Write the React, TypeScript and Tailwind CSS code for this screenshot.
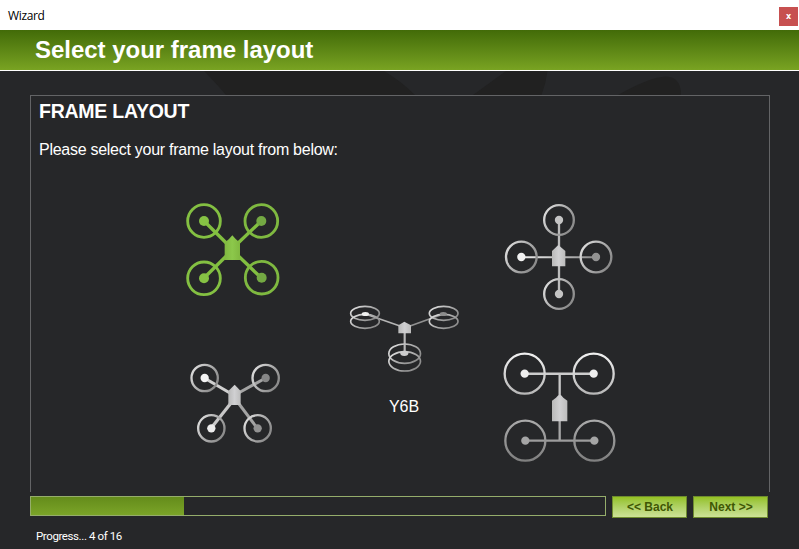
import type { ReactNode } from 'react';

function Shades() {
  return (
    <svg className="block h-6 w-full" viewBox="0 71 799 24" preserveAspectRatio="none" fill="#212121">
      <path d="M204 71H384Q401 81 415 95H226Q214 81 204 71Z" />
      <path d="M506 71H547.5Q546 83 541.5 95H473Z" />
      <path d="M618 95Q650 77 666 76.5Q681 77 681 95Z" />
    </svg>
  );
}

type RotorProps = { x: number; y: number; r: number; stroke: string; hub: string; hr?: number; w?: number };

function Rotor({ x, y, r, stroke, hub, hr = 12.5, w = 7 }: RotorProps) {
  return (
    <g>
      <circle cx={x} cy={y} r={r} fill="none" stroke={stroke} strokeWidth={w} />
      <circle cx={x} cy={y} r={hr} fill={hub} />
    </g>
  );
}

function Metals() {
  return (
    <svg className="absolute h-0 w-0">
      <defs>
        <linearGradient id="ring" x1="0" y1="0" x2="1" y2="0.6">
          <stop offset="0" stopColor="#e6e6e6" />
          <stop offset="0.5" stopColor="#b4b4b4" />
          <stop offset="1" stopColor="#8c8c8c" />
        </linearGradient>
        <linearGradient id="ringTop" x1="0" y1="0" x2="0" y2="1">
          <stop offset="0" stopColor="#f0f0f0" />
          <stop offset="1" stopColor="#b8b8b8" />
        </linearGradient>
        <linearGradient id="ringLow" x1="0" y1="0" x2="0" y2="1">
          <stop offset="0" stopColor="#aaaaaa" />
          <stop offset="1" stopColor="#808080" />
        </linearGradient>
        <linearGradient id="body" x1="0" y1="0" x2="1" y2="0">
          <stop offset="0" stopColor="#b9b9b9" />
          <stop offset="0.5" stopColor="#d0d0d2" />
          <stop offset="1" stopColor="#bcbcbc" />
        </linearGradient>
        <linearGradient id="arm" gradientUnits="userSpaceOnUse" x1="75" y1="0" x2="305" y2="0">
          <stop offset="0" stopColor="#eeeeee" />
          <stop offset="0.5" stopColor="#c2c2c2" />
          <stop offset="1" stopColor="#858585" />
        </linearGradient>
        <linearGradient id="leaf" x1="0" y1="0" x2="1" y2="0">
          <stop offset="0" stopColor="#80b840" />
          <stop offset="0.5" stopColor="#8cc84b" />
          <stop offset="1" stopColor="#80b840" />
        </linearGradient>
      </defs>
    </svg>
  );
}

function XFrame() {
  return (
    <svg className="block h-[110px] w-[110px]" viewBox="0 0 330 330">
      <path d="M72 78L148 153M72 249L148 174M244 78L165 153M244 249L166 174" stroke="#82bf40" strokeWidth="10" />
      <Rotor x={72} y={78} r={49} stroke="#84c042" hub="#86c244" hr={15} w={8.5} />
      <Rotor x={244} y={78} r={49} stroke="#7fb940" hub="#74a943" hr={15} w={8.5} />
      <Rotor x={72} y={250} r={49} stroke="#84c042" hub="#86c244" hr={15} w={8.5} />
      <Rotor x={245} y={248} r={49} stroke="#7fb940" hub="#74a943" hr={15} w={8.5} />
      <path d="M134 143L147 132L157 121L167 132L180 143V195H134Z" fill="url(#leaf)" />
    </svg>
  );
}

function PlusFrame() {
  return (
    <svg className="block h-[120px] w-[130px]" viewBox="0 0 390 360">
      <path d="M80 183.5H302V189.5H80Z" fill="url(#arm)" />
      <path d="M192 75V297" stroke="#bcbcbc" strokeWidth="7" />
      <Rotor x={192} y={75} r={44.5} stroke="url(#ring)" hub="#c4c4c4" />
      <Rotor x={79} y={186} r={46} stroke="url(#ring)" hub="#f2f2f2" />
      <Rotor x={303} y={186} r={46} stroke="url(#ring)" hub="#929292" />
      <Rotor x={192} y={297} r={44.5} stroke="url(#ring)" hub="#c4c4c4" />
      <path d="M171 168L190 150L211 168V214H171Z" fill="url(#body)" />
    </svg>
  );
}

function HFrame() {
  return (
    <svg className="block h-[125px] w-[130px]" viewBox="0 0 390 375">
      <path d="M89 86H296" stroke="#cccccc" strokeWidth="7.5" />
      <path d="M90 287H296" stroke="#9c9c9c" strokeWidth="6.5" />
      <path d="M194 88V160" stroke="#c8c8c8" strokeWidth="7" />
      <path d="M194 225V285" stroke="#a6a6a6" strokeWidth="7" />
      <Rotor x={89} y={86} r={60} stroke="url(#ringTop)" hub="#eeeeee" />
      <Rotor x={296} y={86} r={60} stroke="url(#ringTop)" hub="#eeeeee" />
      <Rotor x={91} y={287} r={60} stroke="url(#ringLow)" hub="#a5a5a5" />
      <Rotor x={298} y={287} r={60} stroke="url(#ringLow)" hub="#a5a5a5" />
      <path d="M171 167L183 158Q190 149 194 149Q199 149 205 158L217 167V229H171Z" fill="url(#body)" />
    </svg>
  );
}

function VFrame() {
  return (
    <svg className="block h-[100px] w-[110px]" viewBox="0 0 330 300">
      <path d="M73 69L155 117" stroke="#d0d0d0" strokeWidth="9.5" />
      <path d="M93 220L153 144" stroke="#c8c8c8" strokeWidth="9.5" />
      <path d="M257 69L170 117" stroke="#a4a4a4" strokeWidth="9" />
      <path d="M232 220L175 144" stroke="#a4a4a4" strokeWidth="9" />
      <Rotor x={74} y={69} r={39.5} stroke="url(#ring)" hub="#f4f4f4" />
      <Rotor x={257} y={69} r={39.5} stroke="url(#ring)" hub="#868686" />
      <Rotor x={94} y={220} r={39.5} stroke="url(#ring)" hub="#ececec" />
      <Rotor x={233} y={220} r={39.5} stroke="url(#ring)" hub="#929292" />
      <path d="M145 108L164 89L182 108V150H145Z" fill="url(#body)" />
    </svg>
  );
}

function YFrame() {
  return (
    <svg className="block h-[90px] w-[130px]" viewBox="0 0 390 270">
      <path d="M76 57L180 93" stroke="#b4b4b4" strokeWidth="5" />
      <path d="M310 57L208 94" stroke="#909090" strokeWidth="5" />
      <path d="M194 112V178" stroke="#b8b8b8" strokeWidth="6.5" />
      <g fill="none" stroke="url(#ring)" strokeWidth="5">
        <ellipse cx="75" cy="55" rx="43" ry="21" />
        <ellipse cx="75" cy="79" rx="43" ry="21" />
        <ellipse cx="311" cy="55" rx="43" ry="21" />
        <ellipse cx="311" cy="79" rx="43" ry="21" />
        <ellipse cx="194" cy="176" rx="47.5" ry="29" />
        <ellipse cx="194" cy="199" rx="47.5" ry="29" />
      </g>
      <ellipse cx="76" cy="57" rx="11" ry="6" fill="#f0f0f0" />
      <ellipse cx="310" cy="57" rx="11" ry="6" fill="#8c8c8c" />
      <ellipse cx="193" cy="175" rx="12" ry="8" fill="#cccccc" />
      <path d="M175 91L193 80L213 91V115H175Z" fill="url(#body)" />
    </svg>
  );
}

function NavButton({ children }: { children: ReactNode }) {
  return (
    <button className="flex h-[22px] w-[75px] items-center justify-center border border-[#6f8c2f] bg-linear-to-b from-[#94c11f] to-[#cde296] pl-px text-[12px] font-bold leading-none text-[#405704]">
      {children}
    </button>
  );
}

export default function App() {
  return (
    <div className="flex h-[549px] w-[799px] flex-col overflow-hidden bg-[#262729] font-['Liberation_Sans',Arial,sans-serif] text-white">
      <Metals />
      <header className="flex h-[30px] shrink-0 items-start justify-between bg-white pr-px pl-2">
        <span className="pt-2 font-['Open_Sans',sans-serif] text-[12px] leading-[15px] tracking-[-0.35px] text-black">Wizard</span>
        <button className="mt-[7px] flex h-[19px] w-[19px] items-center justify-center bg-[#c75050] font-['DejaVu_Sans',sans-serif] text-[8px] font-bold leading-none">x</button>
      </header>
      <div className="flex h-[41px] shrink-0 items-center border-b border-white bg-linear-to-b from-[#426b08] to-[#79a322] pl-[35px]">
        <h1 className="text-[24px] font-bold leading-none tracking-[-0.02px]">Select your frame layout</h1>
      </div>
      <Shades />
      <main className="mr-[29px] ml-[30px] h-[397px] shrink-0 border border-b-0 border-[#636466] bg-[#262729]">
        <div className="h-[99px] pt-1 pl-2">
          <h2 className="text-[19.5px] font-bold leading-[22px] tracking-[-0.25px]">FRAME LAYOUT</h2>
          <p className="mt-[19px] text-[16px] leading-[18px] tracking-[-0.27px]">Please select your frame layout from below:</p>
        </div>
        <div className="flex pl-[149px]">
          <div className="flex flex-col gap-[50px]">
            <XFrame />
            <VFrame />
          </div>
          <div className="ml-[50px] flex flex-col pt-[100px]">
            <YFrame />
            <span className="mt-[13px] pr-[2px] text-center text-[16px] leading-[18px]">Y6B</span>
          </div>
          <div className="ml-[25px] flex flex-col gap-[30px]">
            <PlusFrame />
            <HFrame />
          </div>
        </div>
      </main>
      <footer className="pt-1 pl-[30px]">
        <div className="flex items-start">
          <div className="h-5 w-[576px] border border-[#95ad6b]">
            <div className="h-full w-[153px] bg-linear-to-b from-[#648c1b] to-[#7ba428]" />
          </div>
          <div className="ml-1.5 flex gap-1.5">
            <NavButton>&lt;&lt; Back</NavButton>
            <NavButton>Next &gt;&gt;</NavButton>
          </div>
        </div>
        <p className="mt-[11px] pl-1.5 font-['Roboto',sans-serif] text-[11.5px] leading-[14px] tracking-[-0.4px]">Progress... 4 of 16</p>
      </footer>
    </div>
  );
}
